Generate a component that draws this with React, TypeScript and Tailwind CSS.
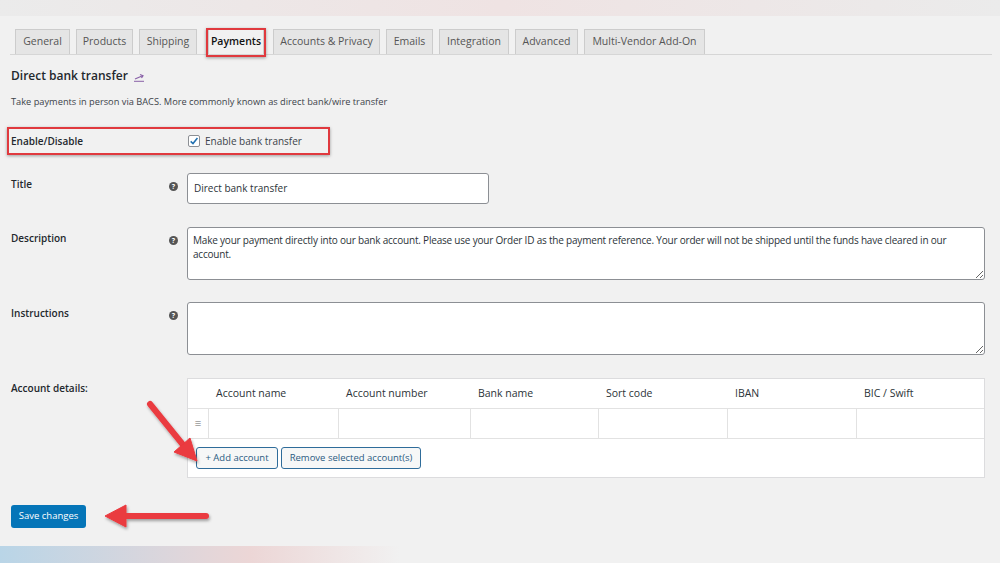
const tabs: [string, number][] = [
  ["General", 55],
  ["Products", 57],
  ["Shipping", 58],
  ["Payments", 56],
  ["Accounts & Privacy", 107],
  ["Emails", 47],
  ["Integration", 70],
  ["Advanced", 63],
  ["Multi-Vendor Add-On", 121],
];

const cols: [string, number][] = [
  ["Account name", 130],
  ["Account number", 132],
  ["Bank name", 128],
  ["Sort code", 129],
  ["IBAN", 129],
  ["BIC / Swift", 128],
];

const Help = () => (
  <span className="w-[9px] h-[9px] rounded-full bg-[#555] text-white text-[7px] leading-[9px] font-bold flex items-center justify-center mt-[5px]">
    ?
  </span>
);

const App = () => {
  return (
    <div
      className="relative w-[1000px] h-[563px] overflow-hidden bg-[#f1f1f1] text-[#23282d]"
      style={{ fontFamily: '"Open Sans", "Noto Sans", sans-serif' }}
    >
      {/* top blur strip */}
      <div className="h-[16px] bg-gradient-to-r from-[#ebebeb] via-[#efe3e3] to-[#ebebeb]" />

      {/* tabs */}
      <div className="mt-[13px] ml-[10px] mr-[8px] flex gap-[6px] pl-[5px] border-b border-[#d6d6d6]">
        {tabs.map(([t, w]) => (
          <div
            key={t}
            style={{ width: w }}
            className={
              t === "Payments"
                ? "h-[25px] flex items-center justify-center border border-[#ccc] border-b-0 bg-[#f1f1f1] text-[10.5px] font-semibold text-[#111] -mb-px ml-[5px] mr-[3px]"
                : "h-[25px] flex items-center justify-center border border-[#ccc] border-b-0 bg-[#e5e5e5] text-[10.5px] text-[#555]"
            }
          >
            {t}
          </div>
        ))}
      </div>

      <div className="pl-[11px] pr-[15px]">
        {/* heading */}
        <div className="mt-[13px] flex items-center gap-[6px]">
          <h2 className="text-[12px] leading-[16px] font-semibold text-[#23282d]">Direct bank transfer</h2>
          <svg width="11" height="9" viewBox="0 0 11 9" className="mt-[2px]">
            <path d="M1 6 L8 3" stroke="#8a62a8" strokeWidth="1.2" />
            <path d="M6 1.5 L9 2.7 L7.5 5" stroke="#8a62a8" strokeWidth="1.2" fill="none" />
            <path d="M0 8.3 H10" stroke="#8a62a8" strokeWidth="1" />
          </svg>
        </div>
        <p className="mt-[12px] text-[9.25px] leading-[12px] text-[#3c434a]">
          Take payments in person via BACS. More commonly known as direct bank/wire transfer
        </p>

        {/* enable row */}
        <div className="mt-[26px] flex items-center h-[14px]">
          <div className="w-[177px] text-[10px] font-semibold">Enable/Disable</div>
          <span className="w-[12px] h-[12px] border border-[#8c8f94] bg-white rounded-[2px] flex items-center justify-center">
            <svg width="10" height="10" viewBox="0 0 9 9">
              <path d="M1.5 4.8 L3.6 6.8 L7.6 1.8" stroke="#2271b1" strokeWidth="1.4" fill="none" />
            </svg>
          </span>
          <span className="ml-[5px] text-[10px] text-[#3c434a]">Enable bank transfer</span>
        </div>

        {/* title */}
        <div className="mt-[25px] flex">
          <div className="w-[176px] flex justify-between pr-[9px] pt-[4px] text-[10px] leading-[14px] font-semibold">
            <span>Title</span>
            <Help />
          </div>
          <div className="w-[302px] h-[31px] bg-white border border-[#8c8f94] rounded-[3px] px-[6px] flex items-center text-[10px] text-[#2c3338]">
            Direct bank transfer
          </div>
        </div>

        {/* description */}
        <div className="mt-[23px] flex">
          <div className="w-[176px] flex justify-between pr-[9px] pt-[4px] text-[10px] leading-[14px] font-semibold">
            <span>Description</span>
            <Help />
          </div>
          <textarea
            readOnly
            defaultValue={
              "Make your payment directly into our bank account. Please use your Order ID as the payment reference. Your order will not be shipped until the funds have cleared in our account."
            }
            className="w-[798px] h-[53px] bg-white border border-[#8c8f94] rounded-[3px] px-[5px] py-[5px] text-[10px] leading-[14px] text-[#2c3338] outline-none tracking-[-0.2px]"
          />
        </div>

        {/* instructions */}
        <div className="mt-[22px] flex">
          <div className="w-[176px] flex justify-between pr-[9px] pt-[4px] text-[10px] leading-[14px] font-semibold">
            <span>Instructions</span>
            <Help />
          </div>
          <textarea
            readOnly
            className="w-[798px] h-[53px] bg-white border border-[#8c8f94] rounded-[3px] px-[5px] py-[5px] text-[10px] outline-none"
          />
        </div>

        {/* account details */}
        <div className="mt-[23px] flex">
          <div className="w-[176px] pt-[3px] text-[10px] leading-[14px] font-semibold">Account details:</div>
          <div className="w-[798px] bg-white border border-[#dcdcde]">
            <div className="flex h-[30px] items-center border-b border-[#e2e2e2] text-[10.5px] text-[#2c3338]">
              <div className="w-[20px]" />
              {cols.map(([c, w]) => (
                <div key={c} style={{ width: w }} className="pl-[8px]">
                  {c}
                </div>
              ))}
            </div>
            <div className="flex h-[30px] border-b border-[#e2e2e2]">
              <div className="w-[20px] flex items-center justify-center text-[#999] text-[11px]">≡</div>
              {cols.map(([c, w]) => (
                <div key={c} style={{ width: w }} className="border-l border-[#e2e2e2]" />
              ))}
            </div>
            <div className="h-[38px] flex items-center gap-[3px] pl-[8px]">
              <button className="h-[22px] w-[82px] border border-[#2f6c9a] bg-[#f6f7f7] rounded-[3px] text-[9.5px] text-[#2b5b82]">
                + Add account
              </button>
              <button className="h-[22px] w-[140px] border border-[#2f6c9a] bg-[#f6f7f7] rounded-[3px] text-[9.5px] text-[#2b5b82]">
                Remove selected account(s)
              </button>
            </div>
          </div>
        </div>

        <button className="mt-[27px] h-[23px] w-[75px] bg-[#0575b8] rounded-[3px] text-white text-[9.5px]">
          Save changes
        </button>
      </div>

      {/* bottom blur strip */}
      <div className="absolute left-0 right-0 bottom-0 h-[17px] bg-gradient-to-r from-[#b9d5e7] via-[#ecd6d6] via-25% to-[#f1f1f1] to-40%" />

      {/* annotations */}
      <div className="absolute left-[206px] top-[28px] w-[60px] h-[29px] border-2 border-[#e0393e] shadow-[0_1px_3px_rgba(0,0,0,0.35)]" />
      <div className="absolute left-[7px] top-[127px] w-[323px] h-[28px] border-2 border-[#e0393e] shadow-[0_1px_3px_rgba(0,0,0,0.35)]" />
      <svg className="absolute left-0 top-0" width="1000" height="563" style={{ pointerEvents: "none" }}>
        <defs>
          <filter id="sh" x="-20%" y="-20%" width="140%" height="140%">
            <feDropShadow dx="1" dy="2" stdDeviation="1.5" floodColor="#000" floodOpacity="0.35" />
          </filter>
        </defs>
        <g filter="url(#sh)" fill="#ea3a3f" stroke="#ea3a3f">
          <path d="M150 404 L184 446" strokeWidth="6" strokeLinecap="round" fill="none" />
          <path d="M197 461 L174 452 L190 438 Z" strokeWidth="1" strokeLinejoin="round" />
          <path d="M206 516 L124 516" strokeWidth="6" strokeLinecap="round" fill="none" />
          <path d="M105 516 L126 505 L126 527 Z" strokeWidth="1" strokeLinejoin="round" />
        </g>
      </svg>
    </div>
  );
};

export default App;
